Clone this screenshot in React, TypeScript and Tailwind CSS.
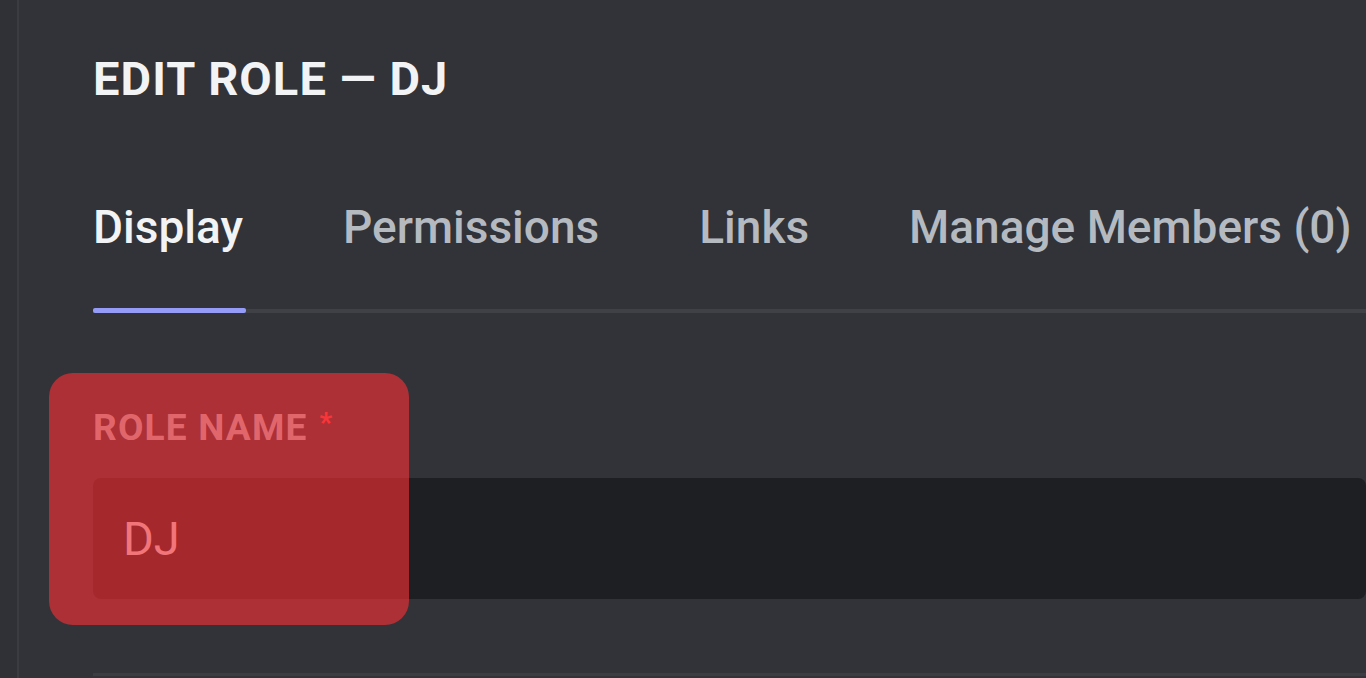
export default function App() {
  const tabs = ['Display', 'Permissions', 'Links', 'Manage Members (0)'];

  return (
    <div
      className="flex h-[678px] w-full overflow-hidden bg-[#313338]"
      style={{ fontFamily: 'Roboto, "Liberation Sans", sans-serif' }}
    >
      {/* sidebar edge */}
      <div className="w-[17px] shrink-0 bg-[#2f3136]" />
      <div className="w-[2px] shrink-0 bg-[#3a3c42]" />

      <div className="relative flex-1 pl-[74px]">
        {/* Header */}
        <h1 className="pt-[55px] text-[47px] leading-[47px] font-bold tracking-[1.1px] text-[#f2f3f5]">
          EDIT ROLE — DJ
        </h1>

        {/* Tabs */}
        <div className="mt-[102px] flex gap-[100px] border-b-[4px] border-[#3f4147] pb-[59px]">
          {tabs.map((tab, i) => (
            <div
              key={tab}
              className={`relative shrink-0 whitespace-nowrap text-[46px] leading-[46px] font-medium ${
                i === 0 ? 'text-[#f2f3f5]' : 'text-[#b5bac1]'
              }`}
            >
              {tab}
              {i === 0 && (
                <div className="absolute left-0 right-[-3px] bottom-[-63px] h-[5px] rounded-[2px] bg-[#949cf7]" />
              )}
            </div>
          ))}
        </div>

        {/* Role name field */}
        <div className="mt-[96px] flex items-start text-[37px] leading-[37px] font-bold tracking-[1.2px] text-[#b5bac1]">
          ROLE NAME
          <span className="ml-[12px] text-[28px] leading-[28px] text-[#f23f42]">*</span>
        </div>
        <div className="mt-[32px] flex h-[121px] items-center rounded-[8px] bg-[#1e1f22] pl-[30px]">
          <span className="text-[47px] leading-none text-[#dbdee1]">DJ</span>
        </div>

        <div className="mt-[74px] h-[3px] bg-[#3b3d43]" />

        {/* highlight overlay */}
        <div className="absolute left-[30px] top-[373px] h-[252px] w-[360px] rounded-[24px] bg-[rgba(255,46,51,0.6)]" />
      </div>
    </div>
  );
}
